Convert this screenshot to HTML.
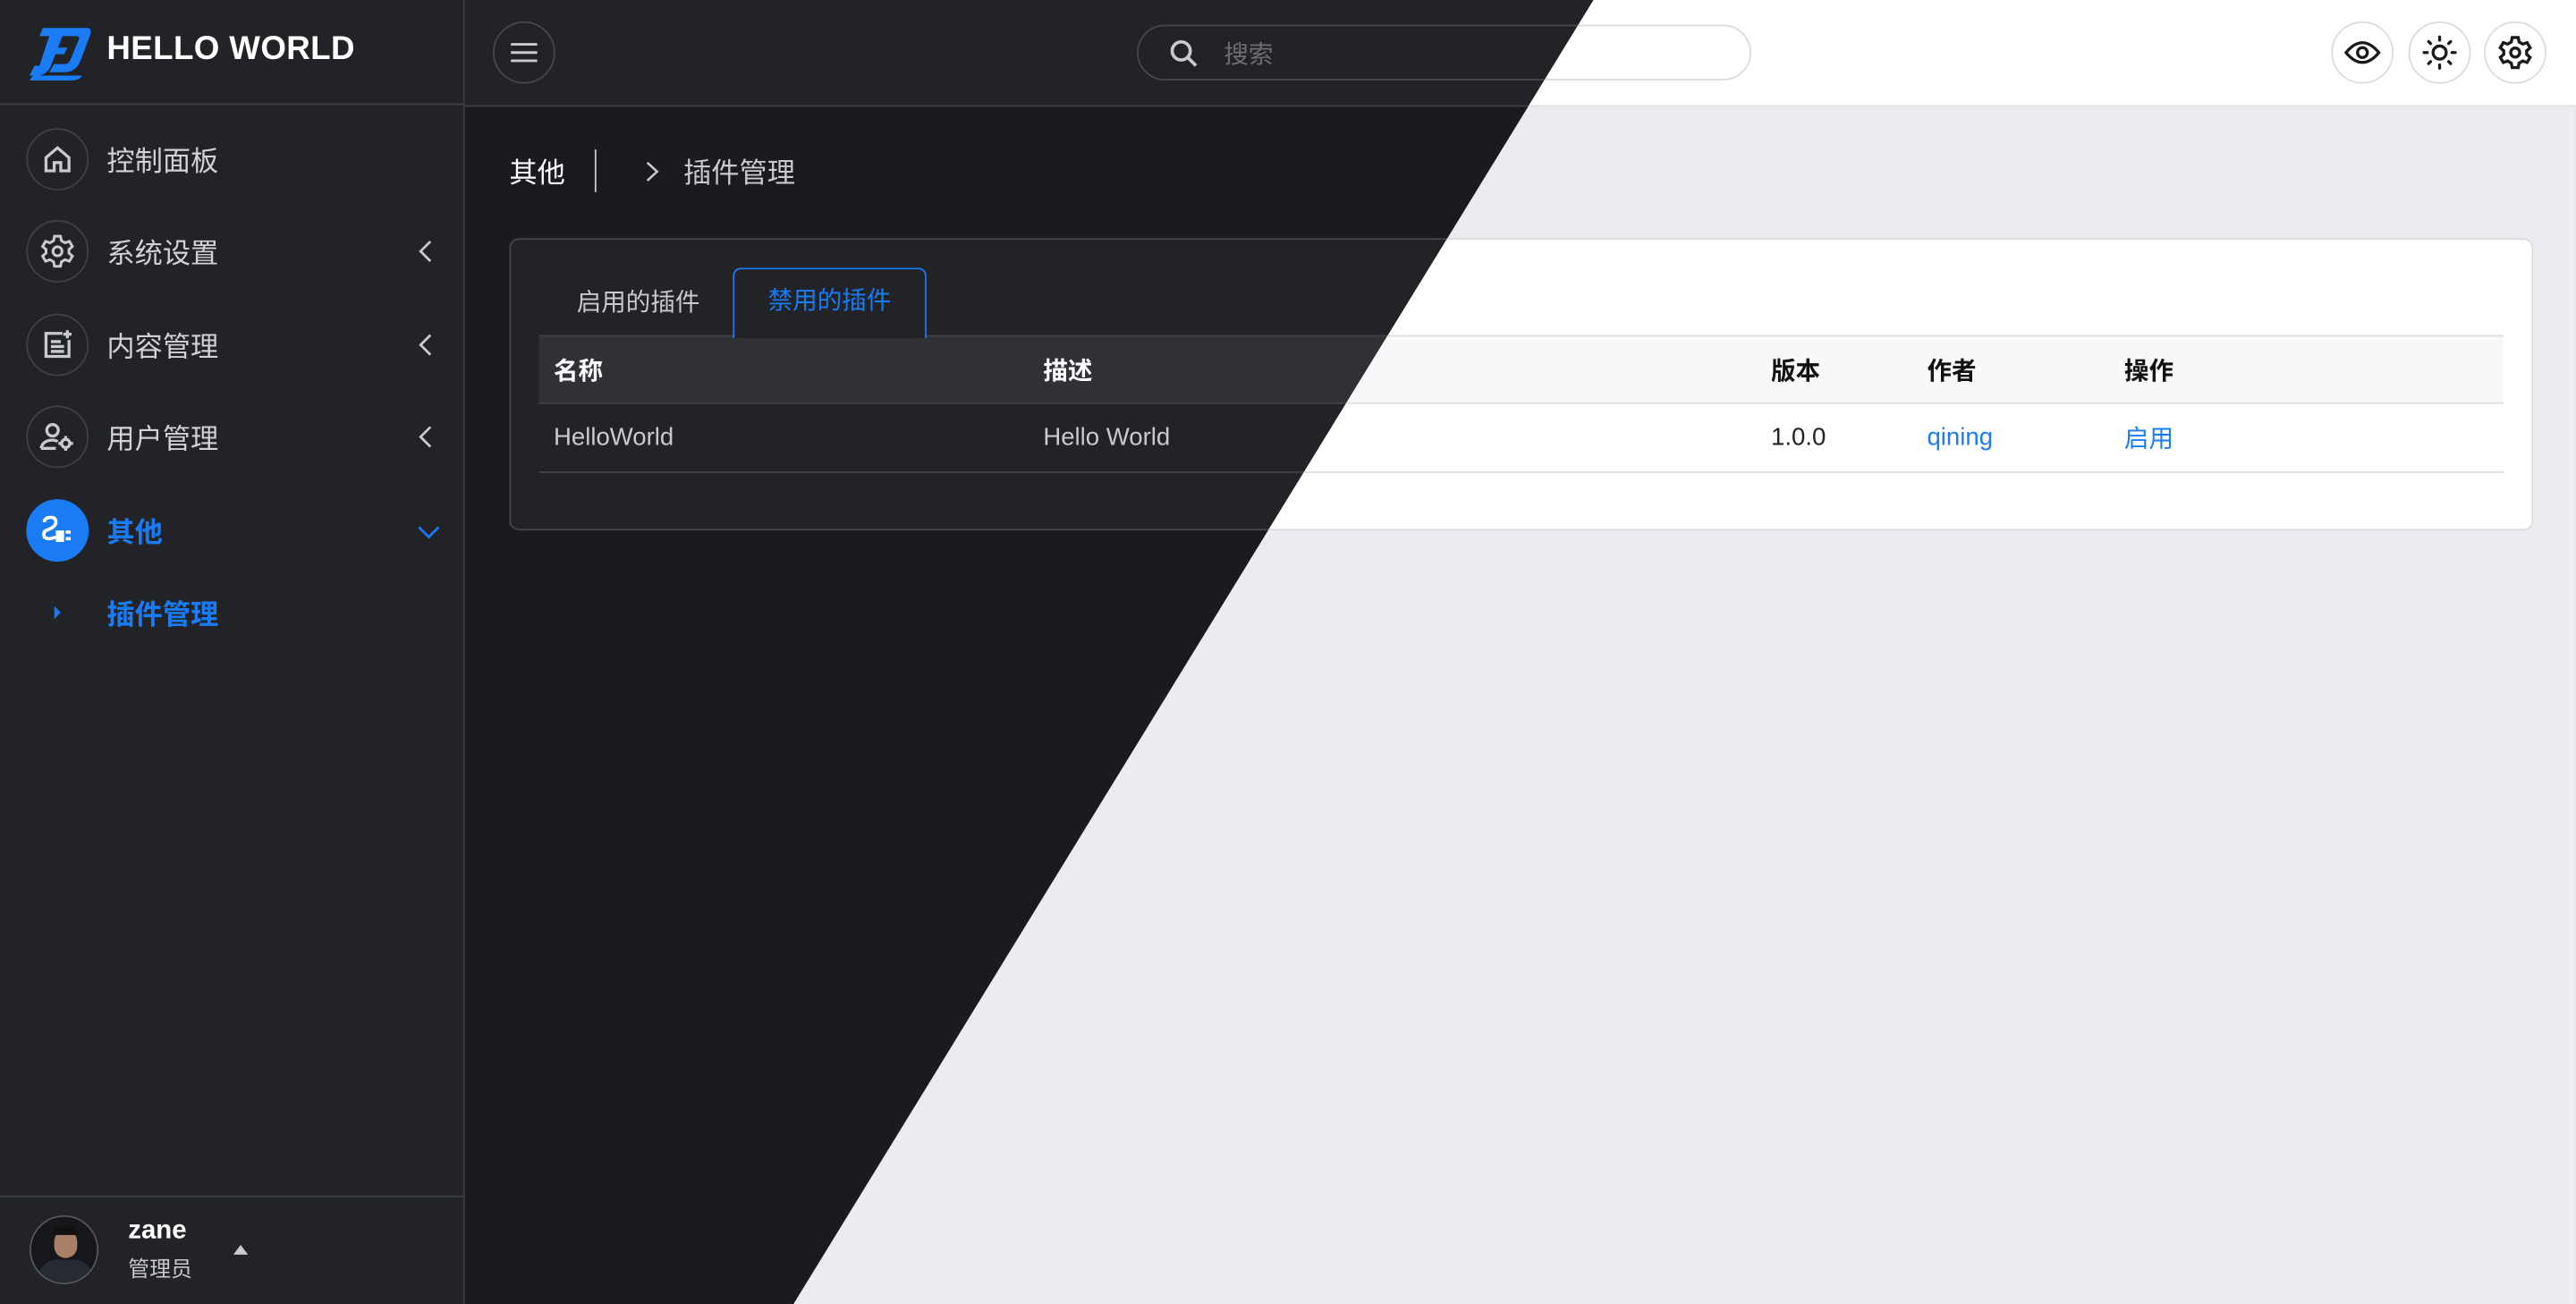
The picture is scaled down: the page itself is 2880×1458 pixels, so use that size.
<!DOCTYPE html>
<html><head><meta charset="utf-8">
<style>
*{box-sizing:border-box;margin:0;padding:0}
html,body{width:2880px;height:1458px;overflow:hidden;background:#1a1b20}
#root{position:absolute;left:0;top:0;width:1568px;height:794px;transform:scale(1.83673,1.83627);transform-origin:0 0;font-family:"Liberation Sans","Noto Sans CJK SC",sans-serif}
.side{position:absolute;left:0;top:0;width:283px;height:794px;background:#212327;border-right:1px solid #3a3c42;color:#d0d2d6}
.logo{position:absolute;left:0;top:0;width:283px;height:64px;border-bottom:1px solid #3e4046}
.logo .t{position:absolute;left:65px;top:19px;font-size:20px;font-weight:bold;color:#fff;letter-spacing:0.2px}
.mi{position:absolute;left:0;width:283px;height:40px}
.mi .c{position:absolute;left:16px;top:1px;width:38px;height:38px;border-radius:50%;border:1px solid #3e4045;display:flex;align-items:center;justify-content:center}
.mi .l{position:absolute;left:65px;top:7px;font-size:17px;color:#d0d2d6}
.mi .ch{position:absolute;left:254px;top:13px}
.foot{position:absolute;left:0;top:728px;width:283px;height:66px;border-top:1px solid #3e4046}
.main{position:absolute;left:283px;top:0;width:1285px;height:794px}
.hdr{position:absolute;left:0;top:0;width:1285px;height:65px;border-bottom:1px solid var(--hb)}
.circ{position:absolute;width:38px;height:38px;border-radius:50%;border:1px solid var(--cb);display:flex;align-items:center;justify-content:center}
.search{position:absolute;left:409px;top:15px;width:374px;height:34px;border-radius:17px;border:1px solid var(--cb)}
.search .p{position:absolute;left:52px;top:6px;font-size:15px;color:var(--ph)}
.bc{position:absolute;top:91px;font-size:17px}
.card{position:absolute;left:27px;top:145px;width:1232px;height:178px;border:1px solid var(--cb);border-radius:6px;background:var(--card)}
.tab1{position:absolute;left:40px;top:27px;font-size:15px;color:var(--tx2)}
.tab2{position:absolute;left:135px;top:17px;width:118px;height:43px;border:1px solid #1a7cf5;border-bottom:none;border-radius:5px 5px 0 0;color:#1a7cf5;font-size:15px;text-align:center;line-height:39px;background:var(--card)}
.th{position:absolute;left:17px;top:58px;width:1196px;height:42px;background:var(--thb);border-top:1px solid var(--lb);border-bottom:1px solid var(--lb)}
.tr{position:absolute;left:17px;top:100px;width:1196px;height:42px;border-bottom:1px solid var(--lb)}
.th span{position:absolute;top:10px;font-size:15px;font-weight:bold;color:var(--tx1)}
.tr span{position:absolute;top:12px;font-size:15px;color:var(--tx2)}
.tr span.cj{top:10px}
.dark{--bg:#1a1b20;--hdr:#212327;--hb:#3e4046;--cb:#44464c;--ph:#6c6e74;--card:#212327;--thb:#303137;--lb:#3e4046;--tx1:#fff;--tx2:#c8cacf;--ic:#c8cacf}
.light{--bg:#ebebf0;--hdr:#fff;--hb:#dedee3;--cb:#dcdce0;--ph:#999;--card:#fff;--thb:#f8f8fb;--lb:#e0e0e4;--tx1:#111;--tx2:#222;--ic:#1a1a1a;clip-path:polygon(687px 0,1285px 0,1285px 794px,200px 794px)}
.main{background:var(--bg)}
.hdr{background:var(--hdr)}
</style></head><body>
<div id="root">
<div class="side">
 <div class="logo">
  <svg style="position:absolute;left:16px;top:15px" width="40" height="35" viewBox="0 0 40 35">
   <path d="M10 2 H37 Q40 2 39 6 L33 22 Q30 29 23 29 H14 L17 24 H23 Q26 24 27 21 L32 9 Q33 7 30 7 H22 L15 25 Q13 30 8 31 H2 L5 25 H8 L14 7 H8 Z" fill="#1a7cf5"/>
   <path d="M15 14 H25 L23 18 H13 Z" fill="#1a7cf5"/>
   <path d="M4 31 H34 Q32 34 28 34 H2 Z" fill="#1a7cf5"/>
  </svg>
  <div class="t">HELLO WORLD</div>
 </div>
 <div class="mi" style="top:77px"><div class="c"><svg width="20" height="20" viewBox="0 0 20 20" fill="none" stroke="#c8cacf" stroke-width="1.8"><path d="M3 9 L10 3 L17 9 V17 H12 V12 H8 V17 H3 Z"/></svg></div><div class="l">控制面板</div></div>
 <div class="mi" style="top:133px"><div class="c"><svg width="22" height="22" viewBox="0 0 24 24" fill="none" stroke="#c8cacf" stroke-width="1.8"><circle cx="12" cy="12" r="3"/><path d="M10 2h4l.6 3 2.4 1.4 2.9-1 2 3.4-2.3 2v2.4l2.3 2-2 3.4-2.9-1L14.6 19l-.6 3h-4l-.6-3L7 17.6l-2.9 1-2-3.4 2.3-2v-2.4l-2.3-2 2-3.4 2.9 1L9.4 5z"/></svg></div><div class="l">系统设置</div><svg class="ch" width="10" height="14" viewBox="0 0 10 14" fill="none" stroke="#c8cacf" stroke-width="1.5"><path d="M8 1 L2 7 L8 13"/></svg></div>
 <div class="mi" style="top:190px"><div class="c"><svg width="20" height="20" viewBox="0 0 20 20" fill="none" stroke="#c8cacf" stroke-width="1.8"><path d="M13 3 H3 V17 H17 V7"/><path d="M16 1 V6 M13.5 3.5 H18.5 M6 8 H12 M6 11 H14 M6 14 H14"/></svg></div><div class="l">内容管理</div><svg class="ch" width="10" height="14" viewBox="0 0 10 14" fill="none" stroke="#c8cacf" stroke-width="1.5"><path d="M8 1 L2 7 L8 13"/></svg></div>
 <div class="mi" style="top:246px"><div class="c"><svg width="22" height="20" viewBox="0 0 22 20" fill="none" stroke="#c8cacf" stroke-width="1.8"><circle cx="8" cy="6" r="3.5"/><path d="M1 17 Q2 12 8 12 Q10 12 11 13 M1 17 H10"/><circle cx="16" cy="14" r="2.5"/><path d="M16 9.5 V11 M16 17 V18.5 M11.5 14 H13 M19 14 H20.5"/></svg></div><div class="l">用户管理</div><svg class="ch" width="10" height="14" viewBox="0 0 10 14" fill="none" stroke="#c8cacf" stroke-width="1.5"><path d="M8 1 L2 7 L8 13"/></svg></div>
 <div class="mi" style="top:303px"><div class="c" style="background:#1a7cf5;border-color:#1a7cf5"><svg width="22" height="18" viewBox="0 0 22 18" fill="none" stroke="#fff" stroke-width="2"><path d="M3 4 Q3 1 7 1 Q10 1 10 4 Q10 7 4 9 Q2 10 3 13 Q5 15 10 13"/><rect x="10" y="9" width="5" height="7" fill="#fff" stroke="none"/><path d="M16 10 H19 M16 14 H19"/></svg></div><div class="l" style="color:#1a7cf5;font-weight:bold">其他</div><svg style="position:absolute;left:254px;top:16px" width="14" height="10" viewBox="0 0 14 10" fill="none" stroke="#1a7cf5" stroke-width="1.5"><path d="M1 2 L7 8 L13 2"/></svg></div>
 <svg style="position:absolute;left:33px;top:369px" width="5" height="8" viewBox="0 0 5 8"><path d="M0 0 L4 4 L0 8Z" fill="#1a7cf5"/></svg>
 <div style="position:absolute;left:65px;top:360px;font-size:17px;font-weight:bold;color:#1a7cf5">插件管理</div>
 <div class="foot">
  <div style="position:absolute;left:18px;top:11px;width:42px;height:42px;border-radius:50%;border:1px solid #55575c;overflow:hidden;background:#16171a">
   <div style="position:absolute;left:14px;top:8px;width:14px;height:17px;border-radius:7px;background:#a88068"></div>
   <div style="position:absolute;left:13px;top:6px;width:16px;height:5px;border-radius:5px 5px 0 0;background:#111"></div>
   <div style="position:absolute;left:4px;top:26px;width:34px;height:20px;border-radius:12px 12px 0 0;background:#262a33"></div>
  </div>
  <div style="position:absolute;left:78px;top:12px;font-size:16px;font-weight:bold;color:#fff">zane</div>
  <div style="position:absolute;left:78px;top:33px;font-size:13px;color:#c8cacf">管理员</div>
  <svg style="position:absolute;left:142px;top:29px" width="9" height="6" viewBox="0 0 9 6"><path d="M0 6 L4.5 0 L9 6Z" fill="#c8cacf"/></svg>
 </div>
</div>

<div class="main dark">
 <div class="hdr">
  <div class="circ" style="left:17px;top:13px"><svg width="18" height="14" viewBox="0 0 18 14" stroke="var(--ic)" stroke-width="1.6"><path d="M1 2H17M1 7H17M1 12H17"/></svg></div>
  <div class="search"><svg style="position:absolute;left:18px;top:7px" width="20" height="20" viewBox="0 0 20 20" fill="none" stroke="var(--ic)" stroke-width="2"><circle cx="8" cy="8" r="5.5"/><path d="M12 12 L17 17"/></svg><div class="p">搜索</div></div>
 </div>
 <div class="bc" style="left:27px;color:var(--tx1)">其他</div>
 <div style="position:absolute;left:79px;top:91px;width:1px;height:26px;background:var(--tx2)"></div>
 <svg style="position:absolute;left:110px;top:98px" width="8" height="13" viewBox="0 0 8 13" fill="none" stroke="var(--tx2)" stroke-width="1.4"><path d="M1 1 L7 6.5 L1 12"/></svg>
 <div class="bc" style="left:133px;color:var(--tx2)">插件管理</div>
 <div class="card">
  <div class="tab1">启用的插件</div>
  <div class="th"><span style="left:9px">名称</span><span style="left:307px">描述</span><span style="left:750px">版本</span><span style="left:845px">作者</span><span style="left:965px">操作</span></div>
  <div class="tr"><span style="left:9px">HelloWorld</span><span style="left:307px">Hello World</span><span style="left:750px">1.0.0</span><span style="left:845px;color:#1a7cf5">qining</span><span class="cj" style="left:965px;color:#1a7cf5">启用</span></div>
  <div class="tab2">禁用的插件</div>
 </div>
</div>

<div class="main light">
 <div class="hdr">
  <div class="circ" style="left:17px;top:13px"><svg width="18" height="14" viewBox="0 0 18 14" stroke="var(--ic)" stroke-width="1.6"><path d="M1 2H17M1 7H17M1 12H17"/></svg></div>
  <div class="search"><svg style="position:absolute;left:18px;top:7px" width="20" height="20" viewBox="0 0 20 20" fill="none" stroke="var(--ic)" stroke-width="2"><circle cx="8" cy="8" r="5.5"/><path d="M12 12 L17 17"/></svg><div class="p">搜索</div></div>
  <div class="circ" style="left:1136px;top:13px"><svg width="22" height="16" viewBox="0 0 22 16" fill="none" stroke="#1a1a1a" stroke-width="1.8"><path d="M1 8 Q11 -4 21 8 Q11 20 1 8Z"/><circle cx="11" cy="8" r="3"/></svg></div>
  <div class="circ" style="left:1183px;top:13px"><svg width="22" height="22" viewBox="0 0 22 22" fill="none" stroke="#1a1a1a" stroke-width="1.8" stroke-linecap="round"><circle cx="11" cy="11" r="4"/><path d="M11 1.5V3.5M11 18.5V20.5M1.5 11H3.5M18.5 11H20.5M4.3 4.3L5.5 5.5M16.5 16.5L17.7 17.7M4.3 17.7L5.5 16.5M16.5 5.5L17.7 4.3"/></svg></div>
  <div class="circ" style="left:1229px;top:13px"><svg width="22" height="22" viewBox="0 0 24 24" fill="none" stroke="#1a1a1a" stroke-width="2"><circle cx="12" cy="12" r="3"/><path d="M10 2h4l.6 3 2.4 1.4 2.9-1 2 3.4-2.3 2v2.4l2.3 2-2 3.4-2.9-1L14.6 19l-.6 3h-4l-.6-3L7 17.6l-2.9 1-2-3.4 2.3-2v-2.4l-2.3-2 2-3.4 2.9 1L9.4 5z"/></svg></div>
 </div>
 <div class="bc" style="left:27px;color:var(--tx1)">其他</div>
 <div style="position:absolute;left:79px;top:91px;width:1px;height:26px;background:var(--tx2)"></div>
 <svg style="position:absolute;left:110px;top:98px" width="8" height="13" viewBox="0 0 8 13" fill="none" stroke="var(--tx2)" stroke-width="1.4"><path d="M1 1 L7 6.5 L1 12"/></svg>
 <div class="bc" style="left:133px;color:var(--tx2)">插件管理</div>
 <div class="card">
  <div class="tab1">启用的插件</div>
  <div class="th"><span style="left:9px">名称</span><span style="left:307px">描述</span><span style="left:750px">版本</span><span style="left:845px">作者</span><span style="left:965px">操作</span></div>
  <div class="tr"><span style="left:9px">HelloWorld</span><span style="left:307px">Hello World</span><span style="left:750px">1.0.0</span><span style="left:845px;color:#1a7cf5">qining</span><span class="cj" style="left:965px;color:#1a7cf5">启用</span></div>
  <div class="tab2">禁用的插件</div>
 </div>
</div>
</div>
</body></html>
